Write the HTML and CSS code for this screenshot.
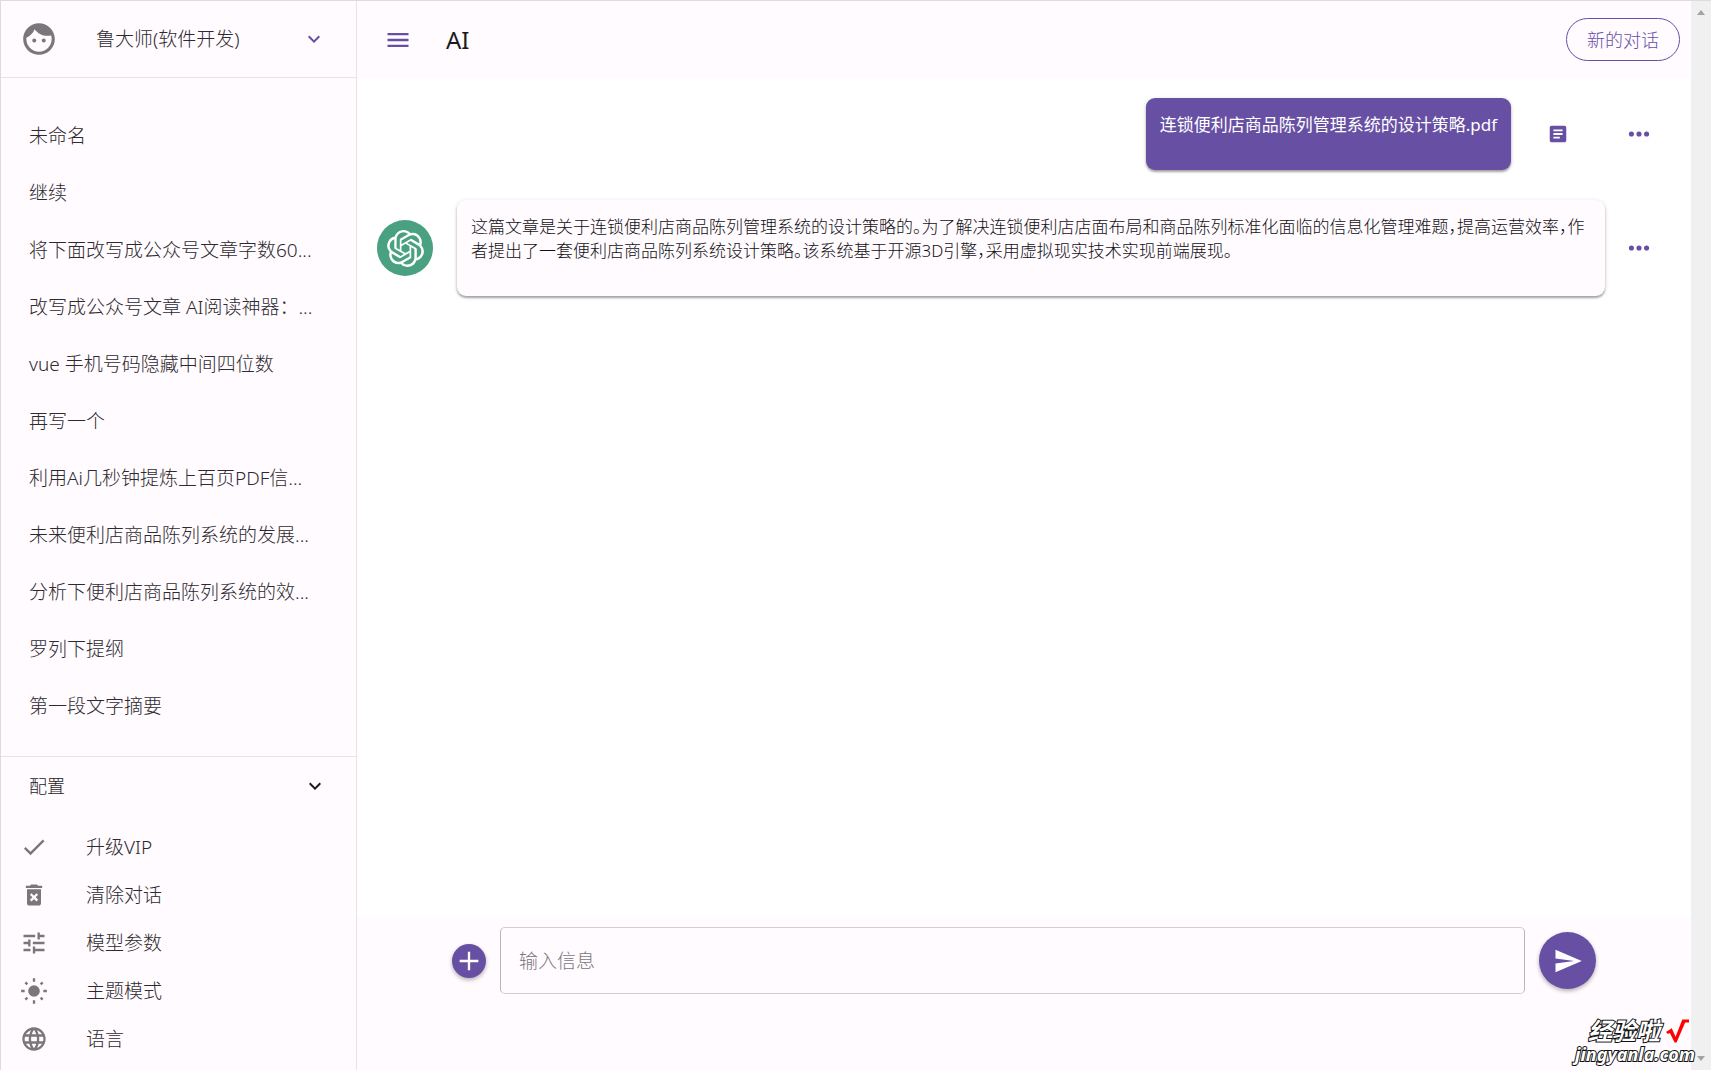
FILE: index.html
```html
<!DOCTYPE html>
<html lang="zh-CN">
<head>
<meta charset="utf-8">
<meta name="viewport" content="width=device-width, initial-scale=1">
<title>AI</title>
<link rel="stylesheet" href="styles.css">
</head>
<body>
<div class="app">
  <aside class="sidebar">
    <button class="account" type="button">
      <svg class="icon icon-face" viewBox="0 0 24 24"><path d="M9 11.75c-.69 0-1.25.56-1.25 1.25s.56 1.25 1.25 1.25 1.25-.56 1.25-1.25-.56-1.25-1.25-1.25zm6 0c-.69 0-1.25.56-1.25 1.25s.56 1.25 1.25 1.25 1.25-.56 1.25-1.25-.56-1.25-1.25-1.25zM12 2C6.48 2 2 6.48 2 12s4.48 10 10 10 10-4.48 10-10S17.52 2 12 2zm0 18c-4.41 0-8-3.59-8-8 0-.29.02-.58.05-.86 2.36-1.05 4.23-2.98 5.21-5.37C11.07 8.33 14.05 10 17.42 10c.78 0 1.53-.09 2.25-.26.21.71.33 1.47.33 2.26 0 4.41-3.59 8-8 8z"/></svg>
      <span class="account-name">鲁大师(软件开发)</span>
      <svg class="icon icon-chevron accent" viewBox="0 0 24 24"><path d="M16.59 8.59L12 13.17 7.41 8.59 6 10l6 6 6-6z"/></svg>
    </button>
    <nav class="history">
      <a href="#">未命名</a>
      <a href="#">继续</a>
      <a href="#">将下面改写成公众号文章字数60...</a>
      <a href="#">改写成公众号文章 AI阅读神器：...</a>
      <a href="#">vue 手机号码隐藏中间四位数</a>
      <a href="#">再写一个</a>
      <a href="#">利用Ai几秒钟提炼上百页PDF信...</a>
      <a href="#">未来便利店商品陈列系统的发展...</a>
      <a href="#">分析下便利店商品陈列系统的效...</a>
      <a href="#">罗列下提纲</a>
      <a href="#">第一段文字摘要</a>
    </nav>
    <section class="settings">
      <button class="settings-toggle" type="button">
        <span>配置</span>
        <svg class="icon icon-chevron" viewBox="0 0 24 24"><path d="M16.59 8.59L12 13.17 7.41 8.59 6 10l6 6 6-6z"/></svg>
      </button>
      <button class="setting" type="button">
        <svg class="icon" viewBox="0 0 24 24"><path d="M9 16.17 4.83 12l-1.42 1.41L9 19 21 7l-1.41-1.41z"/></svg>
        <span>升级VIP</span>
      </button>
      <button class="setting" type="button">
        <svg class="icon" viewBox="0 0 24 24"><path d="M6 19c0 1.1.9 2 2 2h8c1.1 0 2-.9 2-2V7H6v12zm2.46-7.12 1.41-1.41L12 12.59l2.12-2.12 1.41 1.41L13.41 14l2.12 2.12-1.41 1.41L12 15.41l-2.12 2.12-1.41-1.41L10.59 14l-2.13-2.12zM15.5 4l-1-1h-5l-1 1H5v2h14V4z"/></svg>
        <span>清除对话</span>
      </button>
      <button class="setting" type="button">
        <svg class="icon" viewBox="0 0 24 24"><path d="M3 17v2h6v-2H3zM3 5v2h10V5H3zm10 16v-2h8v-2h-8v-2h-2v6h2zM7 9v2H3v2h4v2h2V9H7zm14 4v-2H11v2h10zm-6-4h2V7h4V5h-4V3h-2v6z"/></svg>
        <span>模型参数</span>
      </button>
      <button class="setting" type="button">
        <svg class="icon" viewBox="0 0 24 24"><circle cx="12" cy="12" r="5"/><path class="rays" d="M12 1v3M12 20v3M1 12h3M20 12h3M4.6 4.6l1.7 1.7M17.7 17.7l1.7 1.7M4.6 19.4l1.7-1.7M17.7 6.3l1.7-1.7"/></svg>
        <span>主题模式</span>
      </button>
      <button class="setting" type="button">
        <svg class="icon" viewBox="0 0 24 24"><path d="M11.99 2C6.47 2 2 6.48 2 12s4.47 10 9.99 10C17.52 22 22 17.52 22 12S17.52 2 11.99 2zm6.93 6h-2.95c-.32-1.25-.78-2.45-1.38-3.56 1.84.63 3.37 1.91 4.33 3.56zM12 4.04c.83 1.2 1.48 2.53 1.91 3.96h-3.82c.43-1.43 1.08-2.76 1.91-3.96zM4.26 14C4.1 13.36 4 12.69 4 12s.1-1.36.26-2h3.38c-.08.66-.14 1.32-.14 2 0 .68.06 1.34.14 2H4.26zm.82 2h2.95c.32 1.25.78 2.45 1.38 3.56-1.84-.63-3.37-1.9-4.33-3.56zm2.95-8H5.08c.96-1.66 2.49-2.93 4.33-3.56C8.81 5.55 8.35 6.75 8.03 8zM12 19.96c-.83-1.2-1.48-2.53-1.91-3.96h3.82c-.43 1.43-1.08 2.76-1.91 3.96zM14.34 14H9.66c-.09-.66-.16-1.32-.16-2 0-.68.07-1.35.16-2h4.68c.09.65.16 1.32.16 2 0 .68-.07 1.34-.16 2zm.25 5.56c.6-1.11 1.06-2.31 1.38-3.56h2.95c-.96 1.65-2.49 2.93-4.33 3.56zM16.36 14c.08-.66.14-1.32.14-2 0-.68-.06-1.34-.14-2h3.38c.16.64.26 1.31.26 2s-.1 1.36-.26 2h-3.38z"/></svg>
        <span>语言</span>
      </button>
    </section>
  </aside>

  <main class="chat">
    <header class="topbar">
      <button class="icon-button" type="button" aria-label="菜单">
        <svg class="icon accent" viewBox="0 0 24 24"><path d="M3 18h18v-2H3v2zm0-5h18v-2H3v2zm0-7v2h18V6H3z"/></svg>
      </button>
      <h1 class="title">AI</h1>
      <button class="new-chat" type="button">新的对话</button>
    </header>

    <div class="messages">
      <article class="message message-user">
        <p class="bubble bubble-user">连锁便利店商品陈列管理系统的设计策略.pdf</p>
        <button class="icon-button" type="button" aria-label="文档">
          <svg class="icon icon-article accent" viewBox="0 0 24 24"><path d="M19 3H5c-1.100 0-2 .9-2 2v14c0 1.100.9 2 2 2h14c1.100 0 2-.9 2-2V5c0-1.100-.9-2-2-2zm-5 14H7v-2h7v2zm3-4H7v-2h10v2zm0-4H7V7h10v2z"/></svg>
        </button>
        <button class="icon-button more" type="button" aria-label="更多">
          <svg class="icon accent" viewBox="0 0 24 24"><circle cx="5.500" cy="12" r="2.200"/><circle cx="12" cy="12" r="2.200"/><circle cx="18.500" cy="12" r="2.200"/></svg>
        </button>
      </article>
      <article class="message">
        <span class="avatar">
          <svg class="logo" viewBox="0 0 24 24"><path d="M22.2819 9.8211a5.9847 5.9847 0 0 0-.5157-4.9108 6.0462 6.0462 0 0 0-6.5098-2.9A6.0651 6.0651 0 0 0 4.9807 4.1818a5.9847 5.9847 0 0 0-3.9977 2.9 6.0462 6.0462 0 0 0 .7427 7.0966 5.98 5.98 0 0 0 .511 4.9107 6.051 6.051 0 0 0 6.5146 2.9001A5.9847 5.9847 0 0 0 13.2599 24a6.0557 6.0557 0 0 0 5.7718-4.2058 5.9894 5.9894 0 0 0 3.9977-2.9001 6.0557 6.0557 0 0 0-.7475-7.0729zm-9.022 12.6081a4.4755 4.4755 0 0 1-2.8764-1.0408l.1419-.0804 4.7783-2.7582a.7948.7948 0 0 0 .3927-.6813v-6.7369l2.02 1.1686a.071.071 0 0 1 .038.052v5.5826a4.504 4.504 0 0 1-4.4945 4.4944zm-9.6607-4.1254a4.4708 4.4708 0 0 1-.5346-3.0137l.142.0852 4.783 2.7582a.7712.7712 0 0 0 .7806 0l5.8428-3.3685v2.3324a.0804.0804 0 0 1-.0332.0615L9.74 19.9502a4.4992 4.4992 0 0 1-6.1408-1.6464zM2.3408 7.8956a4.485 4.485 0 0 1 2.3655-1.9728V11.6a.7664.7664 0 0 0 .3879.6765l5.8144 3.3543-2.0201 1.1685a.0757.0757 0 0 1-.071 0l-4.8303-2.7865A4.504 4.504 0 0 1 2.3408 7.872zm16.5963 3.8558L13.1038 8.364 15.1192 7.2a.0757.0757 0 0 1 .071 0l4.8303 2.7913a4.4944 4.4944 0 0 1-.6765 8.1042v-5.6772a.79.79 0 0 0-.407-.667zm2.0107-3.0231l-.142-.0852-4.7735-2.7818a.7759.7759 0 0 0-.7854 0L9.409 9.2297V6.8974a.0662.0662 0 0 1 .0284-.0615l4.8303-2.7866a4.4992 4.4992 0 0 1 6.6802 4.66zM8.3065 12.863l-2.02-1.1638a.0804.0804 0 0 1-.038-.0567V6.0742a4.4992 4.4992 0 0 1 7.3757-3.4537l-.142.0805L8.704 5.459a.7948.7948 0 0 0-.3927.6813zm1.0976-2.3654l2.602-1.4998 2.6069 1.4998v2.9994l-2.5974 1.4997-2.6067-1.4997Z"/></svg>
        </span>
        <p class="bubble bubble-bot">这篇文章是关于连锁便利店商品陈列管理系统的设计策略的。为了解决连锁便利店店面布局和商品陈列标准化面临的信息化管理难题，提高运营效率，作者提出了一套便利店商品陈列系统设计策略。该系统基于开源3D引擎，采用虚拟现实技术实现前端展现。</p>
        <button class="icon-button more" type="button" aria-label="更多">
          <svg class="icon accent" viewBox="0 0 24 24"><circle cx="5.500" cy="12" r="2.200"/><circle cx="12" cy="12" r="2.200"/><circle cx="18.500" cy="12" r="2.200"/></svg>
        </button>
      </article>
    </div>

    <form class="composer">
      <button class="round round-small" type="button" aria-label="添加">
        <svg class="icon icon-plus" viewBox="0 0 24 24"><path d="M20 13h-7v7h-2v-7H4v-2h7V4h2v7h7v2z"/></svg>
      </button>
      <input class="prompt" type="text" placeholder="输入信息" aria-label="输入信息">
      <button class="round round-large" type="submit" aria-label="发送">
        <svg class="icon icon-send" viewBox="0 0 24 24"><path d="M2.010 21 23 12 2.010 3 2 10l15 2-15 2z"/></svg>
      </button>
    </form>
  </main>

  <div class="scrollbar">
    <svg class="arrow" viewBox="0 0 8 5"><path d="M0 5 4 0l4 5z"/></svg>
    <svg class="arrow" viewBox="0 0 8 5"><path d="M0 0h8L4 5z"/></svg>
  </div>

  <div class="watermark">
    <div class="watermark-name">经验啦<svg class="tick" viewBox="0 0 24 24"><path d="M0 13 6 9l4 9L17 0h7v3h-4L11 24H9L4 14l-2 1z"/></svg></div>
    <div class="watermark-site">jingyanla.com</div>
  </div>
</div>
</body>
</html>
```
FILE: styles.css
```css
:root {
  --accent: #6750a4;
  --surface: #fffbff;
  --line: #e8e2e9;
  --text: #2c2a2e;
  --muted: #79777b;
}

* {
  box-sizing: border-box;
}

body {
  margin: 0;
  font-family: "Noto Sans", "Noto Sans CJK SC", sans-serif;
  font-size: 19px;
  font-weight: 300;
  line-height: 24px;
  color: var(--text);
  background: #fff;
}

button,
input {
  font: inherit;
  color: inherit;
}

button {
  padding: 0;
  border: 0;
  background: none;
  text-align: left;
}

.app {
  position: relative;
  display: grid;
  grid-template-columns: 356px 1fr 20px;
  min-height: 100vh;
  border-top: 1px solid #dddbdf;
  border-left: 1px solid #dddbdf;
  overflow: hidden;
}

.icon {
  display: block;
  flex: none;
  width: 28px;
  height: 28px;
  fill: currentColor;
}

.icon-face {
  width: 38px;
  height: 38px;
}

.icon-chevron {
  width: 24px;
  height: 24px;
}

.icon-article {
  width: 22px;
  height: 22px;
}

.icon-send {
  width: 30px;
  height: 30px;
}

.accent {
  color: var(--accent);
}

.rays {
  fill: none;
  stroke: currentColor;
  stroke-width: 2;
}

/* Sidebar */

.sidebar {
  display: flex;
  flex-direction: column;
  background: var(--surface);
  border-right: 1px solid var(--line);
}

.account {
  display: flex;
  align-items: center;
  height: 77px;
  padding: 0 30px 0 19px;
  border-bottom: 1px solid var(--line);
}

.account .icon-face {
  color: var(--muted);
}

.account-name {
  flex: 1;
  padding-left: 38px;
}

.history {
  display: flex;
  flex-direction: column;
  flex: 1;
  padding: 30px 28px 20px;
}

.history a {
  line-height: 57px;
  color: inherit;
  text-decoration: none;
  white-space: nowrap;
}

.settings {
  display: flex;
  flex-direction: column;
  padding-bottom: 7px;
  border-top: 1px solid var(--line);
}

.settings-toggle {
  display: flex;
  align-items: center;
  justify-content: space-between;
  height: 58px;
  margin-bottom: 8px;
  padding: 0 29px 0 28px;
  font-size: 18px;
  color: #1c1b1f;
}

.setting {
  display: flex;
  align-items: center;
  gap: 38px;
  height: 48px;
  padding: 0 19px;
}

.setting .icon {
  color: var(--muted);
}

/* Chat */

.chat {
  display: flex;
  flex-direction: column;
  min-width: 0;
}

.topbar {
  display: flex;
  align-items: center;
  height: 77px;
  padding: 0 11px 0 27px;
  background: var(--surface);
}

.title {
  flex: 1;
  margin: 0;
  padding-left: 34px;
  font-size: 24px;
  font-weight: 400;
  line-height: 32px;
  color: #1c1b1f;
}

.new-chat {
  height: 43px;
  padding: 0 20px;
  border: 1px solid var(--accent);
  border-radius: 22px;
  font-size: 18px;
  color: var(--accent);
}

.messages {
  display: flex;
  flex-direction: column;
  gap: 30px;
  flex: 1;
  padding: 20px 38px 20px 20px;
}

.message {
  display: flex;
  align-items: center;
}

.message-user {
  justify-content: flex-end;
}

.bubble {
  margin: 0;
  padding: 15px 14px 33px;
  border-radius: 9px;
  font-size: 17px;
  font-feature-settings: "halt";
  box-shadow: 0 2px 2px rgba(0, 0, 0, 0.28), 0 1px 4px rgba(0, 0, 0, 0.16);
}

.bubble-user {
  margin-right: 36px;
  font-weight: 400;
  color: #fff;
  background: var(--accent);
}

.bubble-bot {
  flex: 1;
  margin-left: 24px;
  color: #111013;
  background: var(--surface);
}

.message-user .more {
  margin-left: 56px;
}

.bubble-bot + .more {
  margin-left: 20px;
}

.avatar {
  display: grid;
  place-items: center;
  width: 56px;
  height: 56px;
  border-radius: 50%;
  background: #4aa181;
}

.logo {
  width: 37px;
  height: 37px;
  fill: #fff;
}

/* Composer */

.composer {
  display: flex;
  align-items: center;
  height: 153px;
  padding: 0 95px 66px;
  background: var(--surface);
}

.round {
  display: grid;
  place-items: center;
  flex: none;
  border-radius: 50%;
  color: #fff;
  background: var(--accent);
  box-shadow: 0 2px 4px rgba(0, 0, 0, 0.3);
}

.round-small {
  width: 34px;
  height: 34px;
}

.round-large {
  width: 57px;
  height: 57px;
}

.prompt {
  flex: 1;
  min-width: 0;
  height: 67px;
  margin: 0 14px;
  padding: 0 18px;
  border: 1px solid #b9b5bb;
  border-top-color: #d3ced4;
  border-bottom-color: #d3ced4;
  border-radius: 5px;
  background: transparent;
}

.prompt::placeholder {
  color: var(--muted);
  opacity: 1;
}

/* Page scrollbar */

.scrollbar {
  display: flex;
  flex-direction: column;
  align-items: center;
  justify-content: space-between;
  padding: 9px 0;
  background: #f0f0f0;
}

.arrow {
  width: 8px;
  height: 5px;
  fill: #a3a3a3;
}

/* Watermark laid over the page corner */

.watermark {
  position: absolute;
  right: 16px;
  bottom: 6px;
  font-weight: 700;
  font-style: italic;
  color: #fff;
  text-align: right;
  -webkit-text-stroke: 2px #111;
  paint-order: stroke fill;
}

.watermark-name {
  display: flex;
  align-items: center;
  justify-content: flex-end;
  gap: 6px;
  padding-right: 6px;
  font-size: 24px;
  line-height: 26px;
}

.watermark-site {
  font-size: 18px;
  line-height: 20px;
}

.tick {
  width: 23px;
  height: 24px;
  fill: #f00;
}
```
